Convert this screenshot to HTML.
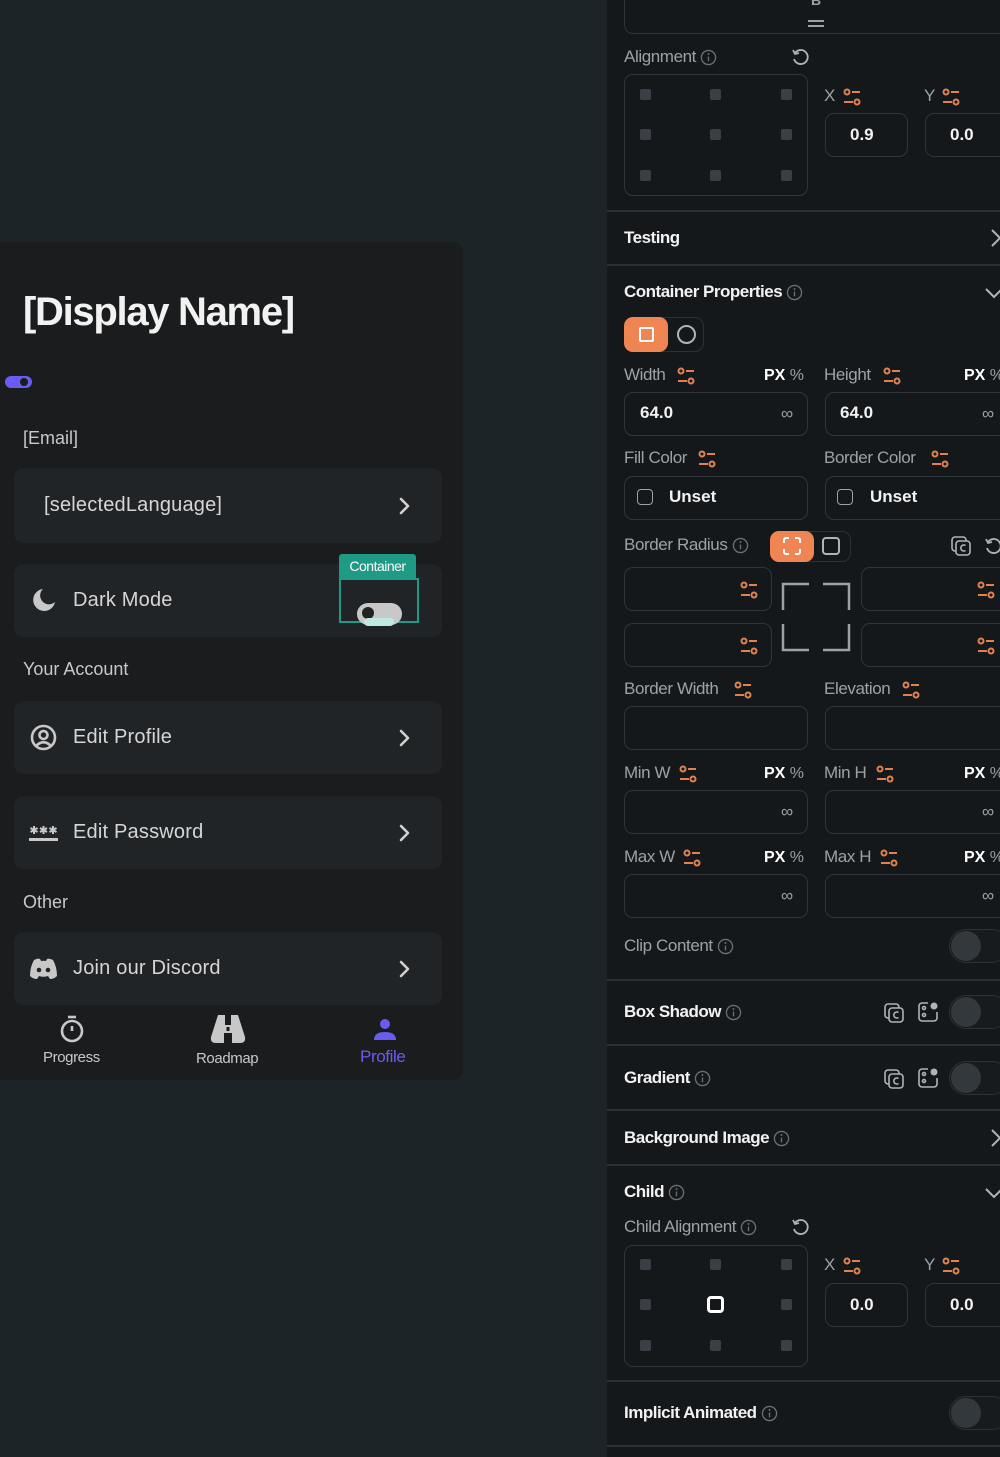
<!DOCTYPE html>
<html><head><meta charset="utf-8">
<style>
*{margin:0;padding:0;box-sizing:border-box}
body{width:1000px;height:1457px;overflow:hidden;background:#1d2427;font-family:"Liberation Sans",sans-serif;position:relative}
.a{position:absolute}
.card{left:0;top:242px;width:463px;height:838px;background:#1a1c1d;border-radius:0 10px 10px 0}
.tile{position:absolute;left:14px;width:428px;background:#212426;border-radius:10px}
.tt{position:absolute;left:73px;top:0;line-height:inherit;font-size:20px;color:#d6d6d6;letter-spacing:0.2px}
.sec{position:absolute;left:23px;font-size:18px;color:#c8c8c8;line-height:22px}
.chev{position:absolute;right:28px;top:50%;margin-top:-10px}
.panel{left:607px;top:0;width:393px;height:1457px;background:#14181b}
.l{position:absolute;font-size:17px;color:#9da2a6;line-height:22px;letter-spacing:-0.4px;white-space:nowrap}
.h{position:absolute;font-size:17px;color:#f2f2f2;font-weight:bold;line-height:22px;letter-spacing:-0.5px;white-space:nowrap}
.in{position:absolute;border:1.5px solid #30353a;border-radius:9px}
.v{position:absolute;font-size:17px;font-weight:bold;color:#f2f2f2;line-height:22px}
.div{position:absolute;left:607px;width:393px;height:2px;background:#2a2f33}
.dot{position:absolute;width:11px;height:11px;background:#3a3f45;border-radius:2px}
.px{position:absolute;font-size:16px;line-height:20px;white-space:nowrap}
.px b{color:#fff}.px span{color:#9da2a6}
.inf{display:inline-block;vertical-align:middle}
.tog{position:absolute;width:60px;height:34px;border-radius:17px;border:1.5px solid #2c3135;background:#171b1e}
.tog i{position:absolute;left:1px;top:1px;width:30px;height:30px;border-radius:50%;background:#33383d}
.inft{position:absolute;font-size:17px;color:#9da2a6}
</style></head><body>
<svg width="0" height="0" style="position:absolute">
<defs>
<symbol id="sl" viewBox="0 0 20 20"><g fill="none" stroke="#e0824f" stroke-width="2"><circle cx="5" cy="5" r="2.5"/><line x1="10" y1="5" x2="18" y2="5"/><line x1="2" y1="15" x2="11" y2="15"/><circle cx="15" cy="15" r="2.5"/></g></symbol>
<symbol id="info" viewBox="0 0 18 18"><g fill="none" stroke="#6b7075" stroke-width="1.4"><circle cx="9" cy="9" r="7.5"/><line x1="9" y1="8" x2="9" y2="13"/></g><circle cx="9" cy="5.3" r="1" fill="#6b7075"/></symbol>
<symbol id="rst" viewBox="0 0 20 20"><g fill="none" stroke="#b0b4b8" stroke-width="1.8"><path d="M5 6 A7 7 0 1 1 4 12"/><path d="M3 3 L5 7 L9 6"/></g></symbol>
<symbol id="chv" viewBox="0 0 20 20"><path d="M7 3 L14 10 L7 17" fill="none" stroke="#d0d0d0" stroke-width="2.6" stroke-linecap="round" stroke-linejoin="round"/></symbol>
<symbol id="cp" viewBox="0 0 22 22"><g fill="none" stroke="#b0b4b8" stroke-width="1.6"><rect x="2" y="2" width="14" height="14" rx="3"/><rect x="6" y="6" width="14" height="14" rx="3" fill="#14181b"/><path d="M15.5 10.5 A3 3 0 1 0 15.5 15.5"/></g></symbol>
<symbol id="pp" viewBox="0 0 22 22"><g fill="none" stroke="#b0b4b8" stroke-width="1.6"><path d="M11 2 H5 A3 3 0 0 0 2 5 V17 A3 3 0 0 0 5 20 H17 A3 3 0 0 0 20 17 V11"/><circle cx="7" cy="7" r="1.5"/><circle cx="7" cy="14" r="1.5"/></g><circle cx="17" cy="5" r="3.5" fill="#b0b4b8"/></symbol>
</defs></svg>

<!-- LEFT CARD -->
<div class="a card"></div>
<div class="a" style="left:23px;top:287px;font-size:40px;font-weight:bold;color:#f2f2f2;letter-spacing:-1.3px;line-height:50px">[Display Name]</div>
<div class="a" style="left:5px;top:376px;width:27px;height:12px;border-radius:6px;background:#6a5cf0"></div>
<div class="a" style="left:20px;top:378px;width:8px;height:8px;border-radius:50%;background:#1a1c1d"></div>
<div class="sec" style="top:427px">[Email]</div>

<div class="tile" style="top:468px;height:75px;line-height:75px"><div class="tt" style="left:30px">[selectedLanguage]</div><svg class="chev" width="20" height="20"><use href="#chv"/></svg></div>
<div class="tile" style="top:564px;height:73px;line-height:73px">
 <svg class="a" style="left:17px;top:23px" width="26" height="26" viewBox="0 0 26 26"><path d="M12 2 A11 11 0 1 0 24 15 A8 8 0 0 1 12 2Z" fill="#c8c8c8"/></svg>
 <div class="tt" style="left:59px">Dark Mode</div></div>
<div class="a" style="left:339px;top:554px;width:77px;height:24px;background:#1f9a84;border-radius:3px 3px 0 0;color:#fff;font-size:14px;line-height:24px;text-align:center;letter-spacing:-0.5px">Container</div>
<div class="a" style="left:339px;top:578px;width:80px;height:45px;border:2px solid #1f9a84"></div>
<div class="a" style="left:357px;top:603px;width:45px;height:22px;border-radius:11px;background:#c8c8c8"></div>
<div class="a" style="left:362px;top:607px;width:12px;height:12px;border-radius:50%;background:#222"></div>
<div class="a" style="left:364px;top:618px;width:30px;height:8px;border-radius:4px;background:#bfe9df"></div>

<div class="sec" style="top:658px">Your Account</div>
<div class="tile" style="top:701px;height:73px;line-height:73px">
 <svg class="a" style="left:16px;top:23px" width="27" height="27" viewBox="0 0 27 27"><g fill="none" stroke="#c8c8c8" stroke-width="2.6"><circle cx="13.5" cy="13.5" r="11.5"/><circle cx="13.5" cy="11" r="4"/><path d="M6.5 21.5 Q13.5 15 20.5 21.5"/></g></svg>
 <div class="tt" style="left:59px">Edit Profile</div><svg class="chev" width="20" height="20"><use href="#chv"/></svg></div>
<div class="tile" style="top:796px;height:73px;line-height:73px">
 <svg class="a" style="left:15px;top:29px" width="30" height="18" viewBox="0 0 30 18"><g stroke="#c8c8c8" stroke-width="2"><path d="M5 1 V9 M1.5 3 L8.5 7 M8.5 3 L1.5 7"/><path d="M14.5 1 V9 M11 3 L18 7 M18 3 L11 7"/><path d="M24 1 V9 M20.5 3 L27.5 7 M27.5 3 L20.5 7"/></g><rect x="0" y="13" width="29" height="3" fill="#c8c8c8"/></svg>
 <div class="tt" style="left:59px">Edit Password</div><svg class="chev" width="20" height="20"><use href="#chv"/></svg></div>
<div class="sec" style="top:891px">Other</div>
<div class="tile" style="top:932px;height:73px;line-height:73px">
 <svg class="a" style="left:15px;top:26px" width="29" height="22" viewBox="0 0 29 22"><path d="M5 2 Q9 0 11 1 L12 3 Q14.5 2.6 17 3 L18 1 Q20 0 24 2 Q28 9 28 18 Q25 21 21 21 L19 18 Q14.5 19.5 10 18 L8 21 Q4 21 1 18 Q1 9 5 2Z" fill="#c8c8c8"/><circle cx="10" cy="12" r="2.3" fill="#212426"/><circle cx="19" cy="12" r="2.3" fill="#212426"/></svg>
 <div class="tt" style="left:59px">Join our Discord</div><svg class="chev" width="20" height="20"><use href="#chv"/></svg></div>

<!-- nav -->
<svg class="a" style="left:59px;top:1015px" width="26" height="28" viewBox="0 0 26 28"><g fill="none" stroke="#c8c8c8" stroke-width="2.6"><circle cx="13" cy="16" r="10"/><line x1="13" y1="11" x2="13" y2="16"/><line x1="9" y1="2" x2="17" y2="2"/></g></svg>
<div class="a" style="left:43px;top:1049px;font-size:15px;color:#c8c8c8;letter-spacing:-0.4px">Progress</div>
<svg class="a" style="left:210px;top:1015px" width="36" height="30" viewBox="0 0 36 30"><path d="M8 0 H15 V10 H21 V0 H28 L35 22 Q36 28 30 28 H22 V18 H14 V28 H6 Q0 28 1 22Z" fill="#c8c8c8"/><rect x="16.5" y="12" width="3" height="4" fill="#1a1c1d"/></svg>
<div class="a" style="left:196px;top:1050px;font-size:15px;color:#c8c8c8;letter-spacing:-0.4px">Roadmap</div>
<svg class="a" style="left:373px;top:1017px" width="24" height="24" viewBox="0 0 24 24"><g fill="#6a5cf0"><circle cx="12" cy="7" r="5"/><path d="M1 23 Q1 15 12 15 Q23 15 23 23Z"/></g></svg>
<div class="a" style="left:360px;top:1047px;font-size:17px;color:#6a5cf0;letter-spacing:-0.4px">Profile</div>

<!-- PANEL -->
<div class="a panel"></div>
<div class="in" style="left:624px;top:-20px;width:400px;height:54px"></div>
<div class="a" style="left:811px;top:-8px;font-size:14px;color:#9da2a6;font-weight:bold">B</div>
<div class="a" style="left:808px;top:20px;width:16px;height:7px;border-top:2px solid #9da2a6;border-bottom:2px solid #9da2a6"></div>

<div class="l" style="left:624px;top:46px">Alignment <svg class="inf" width="17" height="17"><use href="#info"/></svg></div>
<svg class="a" style="left:790px;top:47px" width="20" height="20"><use href="#rst"/></svg>
<div class="in" style="left:624px;top:74px;width:184px;height:122px"></div>
<div class="dot" style="left:640px;top:89px"></div><div class="dot" style="left:710px;top:89px"></div><div class="dot" style="left:781px;top:89px"></div>
<div class="dot" style="left:640px;top:129px"></div><div class="dot" style="left:710px;top:129px"></div><div class="dot" style="left:781px;top:129px"></div>
<div class="dot" style="left:640px;top:170px"></div><div class="dot" style="left:710px;top:170px"></div><div class="dot" style="left:781px;top:170px"></div>
<div class="l" style="left:824px;top:85px">X</div><svg class="a" style="left:842px;top:87px" width="20" height="20"><use href="#sl"/></svg>
<div class="l" style="left:924px;top:85px">Y</div><svg class="a" style="left:941px;top:87px" width="20" height="20"><use href="#sl"/></svg>
<div class="in" style="left:825px;top:113px;width:83px;height:44px"></div><div class="v" style="left:850px;top:124px">0.9</div>
<div class="in" style="left:925px;top:113px;width:100px;height:44px"></div><div class="v" style="left:950px;top:124px">0.0</div>

<div class="div" style="top:210px"></div>
<div class="h" style="left:624px;top:227px">Testing</div>
<svg class="a" style="left:986px;top:228px" width="20" height="20" viewBox="0 0 20 20"><path d="M6 2 L14 10 L6 18" fill="none" stroke="#b0b4b8" stroke-width="2"/></svg>
<div class="div" style="top:264px"></div>
<div class="h" style="left:624px;top:281px">Container Properties <svg class="inf" width="17" height="17"><use href="#info"/></svg></div>
<svg class="a" style="left:984px;top:283px" width="20" height="20" viewBox="0 0 20 20"><path d="M2 6 L10 14 L18 6" fill="none" stroke="#b0b4b8" stroke-width="2"/></svg>
<div class="a" style="left:624px;top:317px;width:80px;height:35px;border:1.5px solid #2c3135;border-radius:9px"></div>
<div class="a" style="left:624px;top:317px;width:44px;height:35px;background:#ee8552;border-radius:9px"></div>
<div class="a" style="left:639px;top:327px;width:15px;height:15px;border:2.5px solid #fff;border-radius:2px"></div>
<div class="a" style="left:677px;top:325px;width:19px;height:19px;border:2px solid #b0b4b8;border-radius:50%"></div>

<div class="l" style="left:624px;top:364px">Width</div><svg class="a" style="left:676px;top:366px" width="20" height="20"><use href="#sl"/></svg>
<div class="px" style="left:764px;top:366px"><b>PX</b> <span>%</span></div>
<div class="l" style="left:824px;top:364px">Height</div><svg class="a" style="left:882px;top:366px" width="20" height="20"><use href="#sl"/></svg>
<div class="px" style="left:964px;top:366px"><b>PX</b> <span>%</span></div>
<div class="in" style="left:624px;top:392px;width:184px;height:44px"></div><div class="v" style="left:640px;top:402px">64.0</div><div class="inft" style="left:781px;top:404px">∞</div>
<div class="in" style="left:825px;top:392px;width:200px;height:44px"></div><div class="v" style="left:840px;top:402px">64.0</div><div class="inft" style="left:982px;top:404px">∞</div>

<div class="l" style="left:624px;top:447px">Fill Color</div><svg class="a" style="left:697px;top:449px" width="20" height="20"><use href="#sl"/></svg>
<div class="l" style="left:824px;top:447px">Border Color</div><svg class="a" style="left:930px;top:449px" width="20" height="20"><use href="#sl"/></svg>
<div class="in" style="left:624px;top:476px;width:184px;height:44px"></div>
<div class="a" style="left:637px;top:489px;width:16px;height:16px;border:1.5px solid #9da2a6;border-radius:4px"></div><div class="v" style="left:669px;top:486px">Unset</div>
<div class="in" style="left:825px;top:476px;width:200px;height:44px"></div>
<div class="a" style="left:837px;top:489px;width:16px;height:16px;border:1.5px solid #9da2a6;border-radius:4px"></div><div class="v" style="left:870px;top:486px">Unset</div>

<div class="l" style="left:624px;top:534px">Border Radius <svg class="inf" width="17" height="17"><use href="#info"/></svg></div>
<div class="a" style="left:770px;top:531px;width:81px;height:31px;border:1.5px solid #2c3135;border-radius:9px"></div>
<div class="a" style="left:770px;top:531px;width:44px;height:31px;background:#ee8552;border-radius:9px"></div>
<svg class="a" style="left:782px;top:536px" width="20" height="20" viewBox="0 0 20 20"><g fill="none" stroke="#fff" stroke-width="2"><path d="M7 2 H4 A2 2 0 0 0 2 4 V7"/><path d="M13 2 H16 A2 2 0 0 1 18 4 V7"/><path d="M7 18 H4 A2 2 0 0 1 2 16 V13"/><path d="M13 18 H16 A2 2 0 0 0 18 16 V13"/></g></svg>
<div class="a" style="left:822px;top:537px;width:18px;height:18px;border:2px solid #b0b4b8;border-radius:4px"></div>
<svg class="a" style="left:950px;top:535px" width="22" height="22"><use href="#cp"/></svg>
<svg class="a" style="left:983px;top:536px" width="20" height="20"><use href="#rst"/></svg>
<div class="in" style="left:624px;top:567px;width:148px;height:44px"></div><svg class="a" style="left:739px;top:580px" width="20" height="20"><use href="#sl"/></svg>
<div class="in" style="left:624px;top:623px;width:148px;height:44px"></div><svg class="a" style="left:739px;top:636px" width="20" height="20"><use href="#sl"/></svg>
<div class="in" style="left:861px;top:567px;width:160px;height:44px"></div><svg class="a" style="left:976px;top:580px" width="20" height="20"><use href="#sl"/></svg>
<div class="in" style="left:861px;top:623px;width:160px;height:44px"></div><svg class="a" style="left:976px;top:636px" width="20" height="20"><use href="#sl"/></svg>
<svg class="a" style="left:780px;top:581px" width="72" height="72" viewBox="0 0 72 72"><g fill="none" stroke="#9da2a6" stroke-width="2.5"><path d="M29 3 H3 V29"/><path d="M43 3 H69 V29"/><path d="M3 43 V69 H29"/><path d="M69 43 V69 H43"/></g></svg>

<div class="l" style="left:624px;top:678px">Border Width</div><svg class="a" style="left:733px;top:680px" width="20" height="20"><use href="#sl"/></svg>
<div class="l" style="left:824px;top:678px">Elevation</div><svg class="a" style="left:901px;top:680px" width="20" height="20"><use href="#sl"/></svg>
<div class="in" style="left:624px;top:706px;width:184px;height:44px"></div>
<div class="in" style="left:825px;top:706px;width:200px;height:44px"></div>

<div class="l" style="left:624px;top:762px">Min W</div><svg class="a" style="left:678px;top:764px" width="20" height="20"><use href="#sl"/></svg>
<div class="px" style="left:764px;top:764px"><b>PX</b> <span>%</span></div>
<div class="l" style="left:824px;top:762px">Min H</div><svg class="a" style="left:875px;top:764px" width="20" height="20"><use href="#sl"/></svg>
<div class="px" style="left:964px;top:764px"><b>PX</b> <span>%</span></div>
<div class="in" style="left:624px;top:790px;width:184px;height:44px"></div><div class="inft" style="left:781px;top:802px">∞</div>
<div class="in" style="left:825px;top:790px;width:200px;height:44px"></div><div class="inft" style="left:982px;top:802px">∞</div>

<div class="l" style="left:624px;top:846px">Max W</div><svg class="a" style="left:682px;top:848px" width="20" height="20"><use href="#sl"/></svg>
<div class="px" style="left:764px;top:848px"><b>PX</b> <span>%</span></div>
<div class="l" style="left:824px;top:846px">Max H</div><svg class="a" style="left:879px;top:848px" width="20" height="20"><use href="#sl"/></svg>
<div class="px" style="left:964px;top:848px"><b>PX</b> <span>%</span></div>
<div class="in" style="left:624px;top:874px;width:184px;height:44px"></div><div class="inft" style="left:781px;top:886px">∞</div>
<div class="in" style="left:825px;top:874px;width:200px;height:44px"></div><div class="inft" style="left:982px;top:886px">∞</div>

<div class="l" style="left:624px;top:935px">Clip Content <svg class="inf" width="17" height="17"><use href="#info"/></svg></div>
<div class="tog" style="left:949px;top:929px"><i></i></div>

<div class="div" style="top:979px"></div>
<div class="h" style="left:624px;top:1001px">Box Shadow <svg class="inf" width="17" height="17"><use href="#info"/></svg></div>
<svg class="a" style="left:883px;top:1002px" width="22" height="22"><use href="#cp"/></svg>
<svg class="a" style="left:917px;top:1001px" width="22" height="22"><use href="#pp"/></svg>
<div class="tog" style="left:949px;top:995px"><i></i></div>
<div class="div" style="top:1044px"></div>
<div class="h" style="left:624px;top:1067px">Gradient <svg class="inf" width="17" height="17"><use href="#info"/></svg></div>
<svg class="a" style="left:883px;top:1068px" width="22" height="22"><use href="#cp"/></svg>
<svg class="a" style="left:917px;top:1067px" width="22" height="22"><use href="#pp"/></svg>
<div class="tog" style="left:949px;top:1061px"><i></i></div>
<div class="div" style="top:1109px"></div>
<div class="h" style="left:624px;top:1127px">Background Image <svg class="inf" width="17" height="17"><use href="#info"/></svg></div>
<svg class="a" style="left:986px;top:1128px" width="20" height="20" viewBox="0 0 20 20"><path d="M6 2 L14 10 L6 18" fill="none" stroke="#b0b4b8" stroke-width="2"/></svg>
<div class="div" style="top:1164px"></div>
<div class="h" style="left:624px;top:1181px">Child <svg class="inf" width="17" height="17"><use href="#info"/></svg></div>
<svg class="a" style="left:984px;top:1183px" width="20" height="20" viewBox="0 0 20 20"><path d="M2 6 L10 14 L18 6" fill="none" stroke="#b0b4b8" stroke-width="2"/></svg>
<div class="l" style="left:624px;top:1216px">Child Alignment <svg class="inf" width="17" height="17"><use href="#info"/></svg></div>
<svg class="a" style="left:790px;top:1217px" width="20" height="20"><use href="#rst"/></svg>
<div class="in" style="left:624px;top:1245px;width:184px;height:122px"></div>
<div class="dot" style="left:640px;top:1259px"></div><div class="dot" style="left:710px;top:1259px"></div><div class="dot" style="left:781px;top:1259px"></div>
<div class="dot" style="left:640px;top:1299px"></div><div class="a" style="left:707px;top:1296px;width:17px;height:17px;border:3px solid #fff;border-radius:4px"></div><div class="dot" style="left:781px;top:1299px"></div>
<div class="dot" style="left:640px;top:1340px"></div><div class="dot" style="left:710px;top:1340px"></div><div class="dot" style="left:781px;top:1340px"></div>
<div class="l" style="left:824px;top:1254px">X</div><svg class="a" style="left:842px;top:1256px" width="20" height="20"><use href="#sl"/></svg>
<div class="l" style="left:924px;top:1254px">Y</div><svg class="a" style="left:941px;top:1256px" width="20" height="20"><use href="#sl"/></svg>
<div class="in" style="left:825px;top:1283px;width:83px;height:44px"></div><div class="v" style="left:850px;top:1294px">0.0</div>
<div class="in" style="left:925px;top:1283px;width:100px;height:44px"></div><div class="v" style="left:950px;top:1294px">0.0</div>
<div class="div" style="top:1380px"></div>
<div class="h" style="left:624px;top:1402px">Implicit Animated <svg class="inf" width="17" height="17"><use href="#info"/></svg></div>
<div class="tog" style="left:949px;top:1396px"><i></i></div>
<div class="div" style="top:1445px"></div>
</body></html>
